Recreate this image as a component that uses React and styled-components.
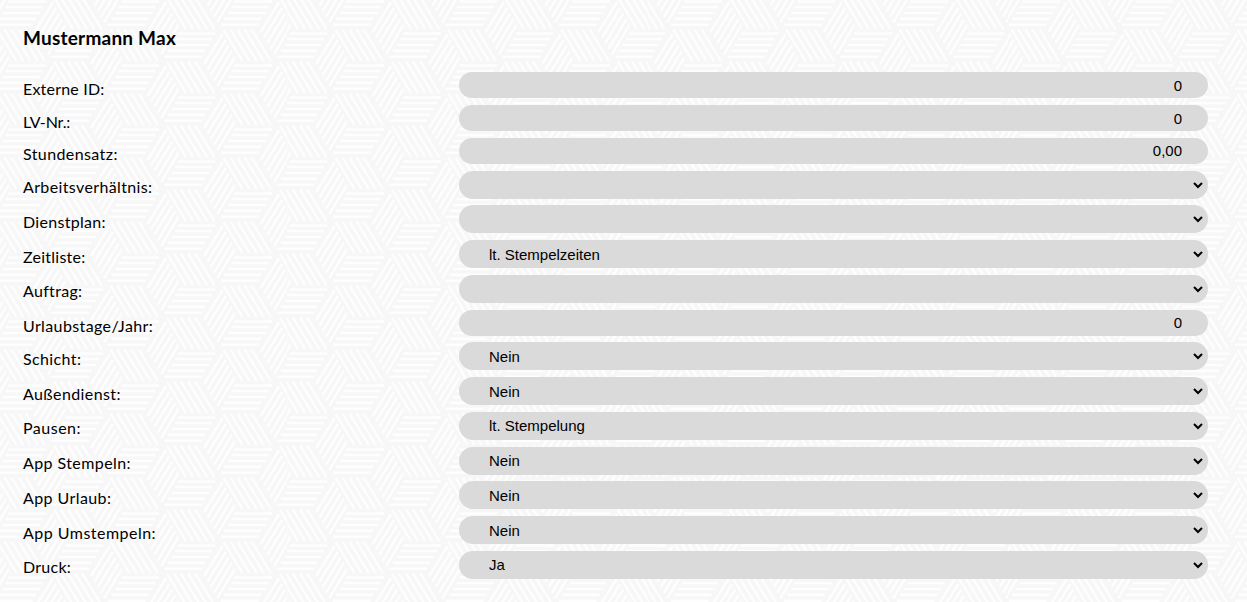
import React from "react";
import styled, { createGlobalStyle } from "styled-components";

const tile = `<svg xmlns="http://www.w3.org/2000/svg" width="112.7" height="64" viewBox="0 0 112.7 64"><defs><g id="t" stroke="#fefefe" stroke-width="2.4" fill="none"><path stroke-width="2.6" d="M14.500 1.500H52M11.500 7.200H48.500M8 13H45.500M4.500 18.900H41.500M1 24.700H38.500"/><path d="M3.400 29.500 22.400 61M10.400 29.500 29.400 61M17.500 29.500 36.500 61M24.600 29.500 43.600 61M31.700 29.500 50.700 61"/><path d="M40.500 32 59 2M43.800 37.600 62 8M47.100 43.200 65 13.700M50.400 48.800 68 19.300M53.700 54.400 71 25"/></g></defs><rect width="112.7" height="64" fill="#f7f7f7"/><use href="#t"/><use href="#t" x="56.35" y="32"/><use href="#t" x="-56.35" y="32"/><use href="#t" x="56.35" y="-32"/><use href="#t" x="-56.35" y="-32"/></svg>`;

const GlobalStyle = createGlobalStyle`
  body {
    margin: 0;
    min-height: 602px;
    background: #f7f7f7 url("data:image/svg+xml,${encodeURIComponent(tile)}") 219.7px 0 / 112.7px 64px;
    color: #000;
    font-family: Lato, sans-serif;
  }
`;

const Page = styled.main`
  box-sizing: border-box;
  padding: 24.25px 39px 0 23px;
`;

const Heading = styled.h1`
  height: 28px;
  margin: 0 0 20px;
  font-size: 19px;
  line-height: 28px;
  font-weight: 700;
  letter-spacing: 0.22px;
`;

const Row = styled.div`
  display: grid;
  grid-template-columns: 436px 749px;
  height: ${(props) => (props.$select ? 34.75 : 32.8)}px;
`;

const Label = styled.label`
  padding-top: 5.53px;
  font-size: 16px;
  line-height: 22px;
  letter-spacing: ${(props) => props.$tracking}px;
`;

const Input = styled.input`
  box-sizing: border-box;
  width: 100%;
  height: 26px;
  padding: 0 26px;
  border: 0;
  border-radius: 15px;
  background: #dadada;
  color: #000;
  font: 15px "Liberation Sans", Arial, sans-serif;
  text-align: right;
`;

const Select = styled.select`
  box-sizing: border-box;
  width: 100%;
  height: 28px;
  padding: 0 0 0 24px;
  border: 2px solid #dadada;
  border-radius: 15px;
  background: #dadada;
  color: #000;
  font: 15px "Liberation Sans", Arial, sans-serif;
`;

const fields = [
  { label: "Externe ID:", value: "0", tracking: 0.2 },
  { label: "LV-Nr.:", value: "0", tracking: -0.15 },
  { label: "Stundensatz:", value: "0,00", tracking: 0.4 },
  { label: "Arbeitsverhältnis:", option: "", tracking: 0.37 },
  { label: "Dienstplan:", option: "", tracking: 0.3 },
  { label: "Zeitliste:", option: "lt. Stempelzeiten", tracking: 0.25 },
  { label: "Auftrag:", option: "", tracking: 0.32 },
  { label: "Urlaubstage/Jahr:", value: "0", tracking: 0.38 },
  { label: "Schicht:", option: "Nein", tracking: 0.38 },
  { label: "Außendienst:", option: "Nein", tracking: 0.4 },
  { label: "Pausen:", option: "lt. Stempelung", tracking: 0.5 },
  { label: "App Stempeln:", option: "Nein", tracking: 0.42 },
  { label: "App Urlaub:", option: "Nein", tracking: 0.42 },
  { label: "App Umstempeln:", option: "Nein", tracking: 0.48 },
  { label: "Druck:", option: "Ja", tracking: 0.25 },
];

const App = () => {
  return (
    <>
      <GlobalStyle />
      <Page>
        <Heading>Mustermann Max</Heading>
        {fields.map(({ label, value, option, tracking }) => (
          <Row key={label} $select={value === undefined}>
            <Label htmlFor={label} $tracking={tracking}>
              {label}
            </Label>
            {value !== undefined ? (
              <Input id={label} defaultValue={value} />
            ) : (
              <Select id={label}>
                <option>{option}</option>
              </Select>
            )}
          </Row>
        ))}
      </Page>
    </>
  );
};

export default App;
